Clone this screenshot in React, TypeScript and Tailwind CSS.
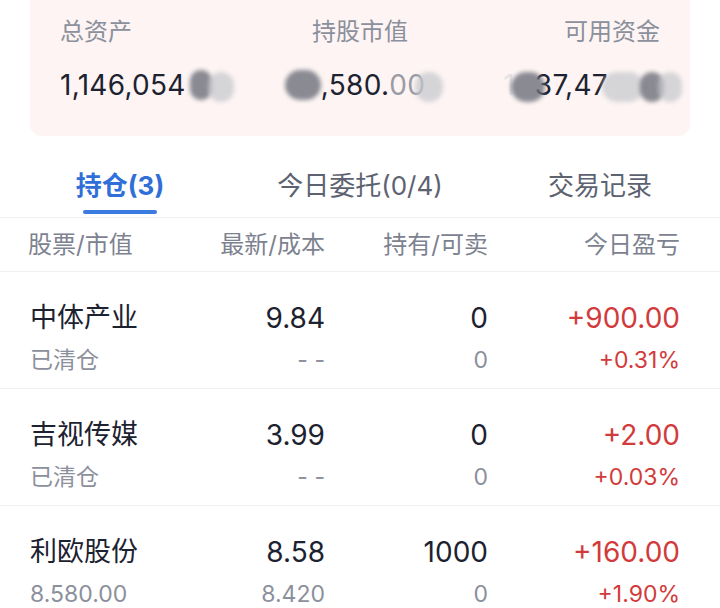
import React from "react";

const FONT = "font-['Inter','Noto_Sans_CJK_SC',sans-serif]";

function Blob({ dark = false, w = 34 }: { dark?: boolean; w?: number }) {
  return (
    <span
      className={
        "inline-block h-[30px] rounded-full align-middle blur-[2px] " +
        (dark ? "bg-[#6d707b] opacity-80" : "bg-[#c5c7cc] opacity-70")
      }
      style={{ width: w }}
    />
  );
}

type Row = {
  name: string;
  sub: string;
  last: string;
  cost: string;
  hold: string;
  avail: string;
  pnl: string;
  pct: string;
};

const rows: Row[] = [
  { name: "中体产业", sub: "已清仓", last: "9.84", cost: "- -", hold: "0", avail: "0", pnl: "+900.00", pct: "+0.31%" },
  { name: "吉视传媒", sub: "已清仓", last: "3.99", cost: "- -", hold: "0", avail: "0", pnl: "+2.00", pct: "+0.03%" },
  { name: "利欧股份", sub: "8.580.00", last: "8.58", cost: "8.420", hold: "1000", avail: "0", pnl: "+160.00", pct: "+1.90%" },
];

export default function App() {
  return (
    <div className={"w-[720px] h-[608px] overflow-hidden bg-white " + FONT}>
      {/* summary card */}
      <div className="mx-[30px] h-[136px] rounded-b-[12px] bg-[#fdf4f3] px-[30px] pt-[17px]">
        <div className="grid grid-cols-3 text-[24px] leading-[30px] text-[#8b909c]">
          <div>总资产</div>
          <div className="text-center">持股市值</div>
          <div className="text-right">可用资金</div>
        </div>
        <div className="mt-[20px] grid grid-cols-3 text-[28px] leading-[36px] tracking-[0.3px] text-[#1d2230]">
          <div className="flex items-center whitespace-nowrap">
            <span>1,146,054</span>
            <span className="ml-[4px] flex items-center">
              <Blob dark w={22} />
              <span className="-ml-[4px]"><Blob w={26} /></span>
            </span>
          </div>
          <div className="flex items-center justify-center whitespace-nowrap pl-[8px]">
            <Blob dark w={36} />
            <span>,580.</span>
            <span className="text-[#9a9ca4]">00</span>
            <span className="-ml-[10px]"><Blob w={28} /></span>
          </div>
          <div className="-mr-[22px] flex items-center justify-end whitespace-nowrap">
            <span className="text-[#e3e3e6]">1</span>
            <span className="-ml-[4px]"><Blob dark w={34} /></span>
            <span className="-ml-[10px]">37,47</span>
            <span className="-ml-[6px]"><Blob w={42} /></span>
            <span className="-ml-[4px]"><Blob dark w={24} /></span>
            <span className="-ml-[6px]"><Blob w={24} /></span>
          </div>
        </div>
      </div>

      {/* tabs */}
      <div className="grid h-[82px] grid-cols-3 border-b border-[#efefef] pt-[33px] text-[26px] leading-[34px]">
        <div className="flex flex-col items-center">
          <span className="font-bold text-[#2f6fd7]">持仓(3)</span>
          <span className="mt-[7px] h-[4px] w-[74px] rounded-full bg-[#3a7be0]" />
        </div>
        <div className="text-center text-[#5d6271]">今日委托(0/4)</div>
        <div className="text-center text-[#5d6271]">交易记录</div>
      </div>

      {/* table header */}
      <div className="grid h-[54px] grid-cols-[130px_165px_163px_192px] items-center border-b border-[#efefef] pl-[30px] pr-[40px] text-[24px] text-[#7d8290]">
        <div className="-ml-[2px] whitespace-nowrap">股票/市值</div>
        <div className="whitespace-nowrap text-right">最新/成本</div>
        <div className="whitespace-nowrap text-right">持有/可卖</div>
        <div className="whitespace-nowrap text-right">今日盈亏</div>
      </div>

      {/* rows */}
      {rows.map((r) => (
        <div
          key={r.name}
          className="grid grid-cols-[130px_165px_163px_192px] border-b border-[#efefef] pb-[13px] pl-[30px] pr-[40px] pt-[29px]"
        >
          <div className="flex flex-col gap-[10px]">
            <div className="h-[34px] whitespace-nowrap text-[27px] leading-[34px] text-[#1d2230]">{r.name}</div>
            <div className="h-[30px] whitespace-nowrap text-[23px] leading-[30px] text-[#8b909c]">{r.sub}</div>
          </div>
          <div className="flex flex-col items-end gap-[10px]">
            <div className="h-[34px] text-[28px] leading-[34px] text-[#1d2230]">{r.last}</div>
            <div className="h-[30px] text-[23px] leading-[30px] text-[#8b909c]">{r.cost}</div>
          </div>
          <div className="flex flex-col items-end gap-[10px]">
            <div className="h-[34px] text-[28px] leading-[34px] text-[#1d2230]">{r.hold}</div>
            <div className="h-[30px] text-[23px] leading-[30px] text-[#8b909c]">{r.avail}</div>
          </div>
          <div className="flex flex-col items-end gap-[10px]">
            <div className="h-[34px] text-[28px] leading-[34px] text-[#d23b3b]">{r.pnl}</div>
            <div className="h-[30px] text-[23px] leading-[30px] text-[#d23b3b]">{r.pct}</div>
          </div>
        </div>
      ))}
    </div>
  );
}
